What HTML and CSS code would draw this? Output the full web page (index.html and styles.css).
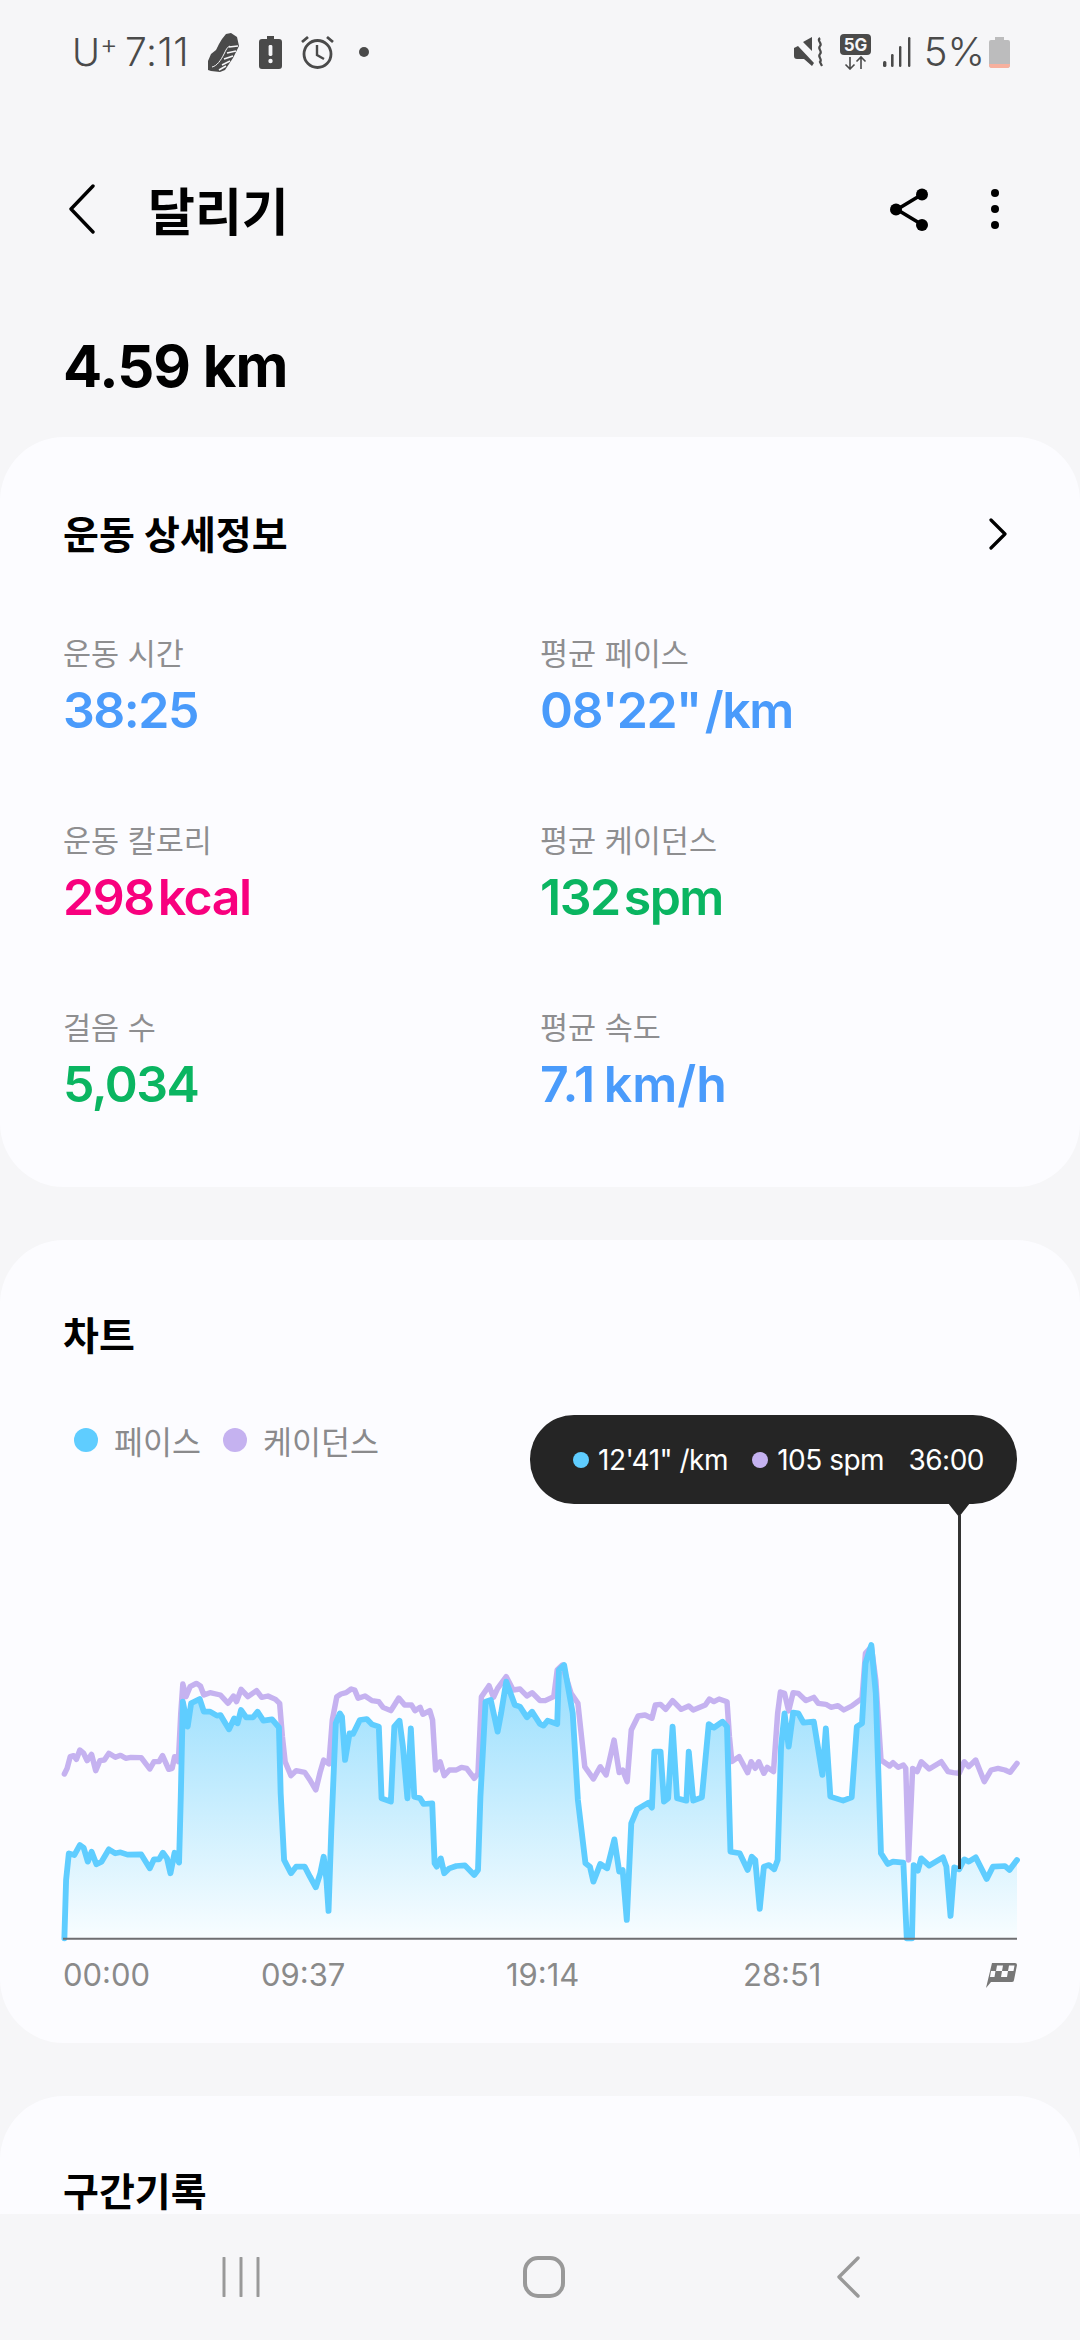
FILE: index.html
```html
<!DOCTYPE html>
<html lang="ko">
<head>
    <meta charset="UTF-8">
    <meta name="viewport" content="width=device-width, initial-scale=1.0">
    <title>달리기</title>
    <link rel="stylesheet" href="styles.css">
</head>
<body>
    <div class="status-bar">
        <div class="status-left">
            <span class="carrier">U<sup>+</sup></span>
            <span class="clock">7:11</span>
            <svg class="ic-shoe" viewBox="0 0 31 39"><path d="M18 1l5-1 6 4 2 9-6 12-8 12-5 2-9-1-3-1 0-9 3-7 5-4 3-6 3-5z" fill="#4a4a4a"/><path d="M30 13l-9 1M28 18l-9 2M25 23l-9 3M22 28l-8 4M18 33l-7 4" stroke="#f6f6f8" stroke-width="1.6" fill="none"/><path d="M4 34c5-1 9-7 12-13 2-4 3-7 6-8" stroke="#f6f6f8" stroke-width="1" fill="none"/></svg>
            <svg class="ic-batt" viewBox="0 0 23 33"><path d="M8 0h7v3h5a3 3 0 0 1 3 3v24a3 3 0 0 1-3 3H3a3 3 0 0 1-3-3V6a3 3 0 0 1 3-3h5z" fill="#4a4a4a"/><rect x="9.6" y="9" width="3.8" height="11" rx="1.4" fill="#f6f6f8"/><circle cx="11.5" cy="25" r="2.2" fill="#f6f6f8"/></svg>
            <svg class="ic-alarm" viewBox="0 0 33 34"><circle cx="16.500" cy="19" r="13.500" fill="none" stroke="#4a4a4a" stroke-width="2.800"/><path d="M16 10v10l7 4" fill="none" stroke="#4a4a4a" stroke-width="2.400"/><path d="M1 7l6-5M32 7l-6-5" stroke="#4a4a4a" stroke-width="2.800"/></svg>
            <span class="status-dot"></span>
        </div>
        <div class="status-right">
            <svg class="ic-mute" viewBox="0 0 30 30"><path d="M0 11l4-2 16 17-2 3-8-7H3a3 3 0 0 1-3-3zM9 5l9-5v14z" fill="#4a4a4a"/><path d="M26 1c-4 3 3 5 0 8s3 5 0 8 3 5 0 8l2 4" fill="none" stroke="#4a4a4a" stroke-width="2.200"/></svg>
            <svg class="ic-5g" viewBox="0 0 31 36"><rect width="31" height="21" rx="4" fill="#4a4a4a"/><text x="15.500" y="16.500" text-anchor="middle" class="ic-5g-text">5G</text><path d="M10 23v12M5.500 30.500l4.500 4.500 4.500-4.500M21 35V23M16.500 27.500l4.500-4.500 4.500 4.500" fill="none" stroke="#4a4a4a" stroke-width="1.600"/></svg>
            <svg class="ic-signal" viewBox="0 0 28 30"><rect x="0" y="24" width="3.400" height="6" rx="1.500" fill="#4a4a4a"/><rect x="8" y="17" width="2.600" height="13" rx="1.200" fill="#4a4a4a"/><rect x="16" y="9" width="2.400" height="21" rx="1.200" fill="#4a4a4a"/><rect x="25" y="0" width="2.400" height="30" rx="1.200" fill="#4a4a4a"/></svg>
            <span class="battery-text">5%</span>
            <svg class="ic-level" viewBox="0 0 21 31"><path d="M6 0h9v3h4a2 2 0 0 1 2 2v23a3 3 0 0 1-3 3H3a3 3 0 0 1-3-3V5a2 2 0 0 1 2-2h4z" fill="#bcbcbd"/><path d="M0 27h21v1a3 3 0 0 1-3 3H3a3 3 0 0 1-3-3z" fill="#f7b09e"/></svg>
        </div>
    </div>

    <div class="app-bar">
        <svg class="back-btn" viewBox="0 0 26 50"><path d="M24 2L2 25l22 23" fill="none" stroke="#000" stroke-width="3.400" stroke-linecap="round" stroke-linejoin="round"/></svg>
        <h1>달리기</h1>
        <svg class="share-btn" viewBox="0 0 38 43"><path d="M31 7L7 21.500 31 36" fill="none" stroke="#000" stroke-width="3.600"/><circle cx="32" cy="6.500" r="6" fill="#000"/><circle cx="6" cy="21.500" r="6" fill="#000"/><circle cx="32" cy="37" r="6" fill="#000"/></svg>
        <div class="more-btn"><span></span><span></span><span></span></div>
    </div>

    <div class="distance">4.59 km</div>

    <main>
        <section class="card card-detail">
            <div class="card-head">
                <h2>운동 상세정보</h2>
                <svg class="card-arrow" viewBox="0 0 20 32"><path d="M3 2l14 14L3 30" fill="none" stroke="#000" stroke-width="3.200" stroke-linecap="round" stroke-linejoin="round"/></svg>
            </div>
            <div class="stats">
                <div class="stat"><p>운동 시간</p><strong class="blue">38:25</strong></div>
                <div class="stat"><p>평균 페이스</p><strong class="blue tight">08'22" /km</strong></div>
                <div class="stat"><p>운동 칼로리</p><strong class="pink tight">298 kcal</strong></div>
                <div class="stat"><p>평균 케이던스</p><strong class="green tight">132 spm</strong></div>
                <div class="stat"><p>걸음 수</p><strong class="green">5,034</strong></div>
                <div class="stat"><p>평균 속도</p><strong class="blue open">7.1 km/h</strong></div>
            </div>
        </section>

        <section class="card card-chart">
            <h2>차트</h2>
            <div class="legend">
                <span class="legend-item"><i class="dot dot-pace"></i>페이스</span>
                <span class="legend-item"><i class="dot dot-cadence"></i>케이던스</span>
            </div>
            <div class="tooltip">
                <span class="tip-item"><i class="tip-dot dot-pace"></i>12'41" /km</span>
                <span class="tip-item"><i class="tip-dot dot-cadence"></i>105 spm</span>
                <span class="tip-item">36:00</span>
                <i class="tip-arrow"></i>
                <i class="tip-stem"></i>
            </div>
            <svg class="chart" viewBox="183 180 2770 900" preserveAspectRatio="none">
                <defs>
                    <linearGradient id="area" gradientUnits="userSpaceOnUse" x1="0" y1="195" x2="0" y2="1075">
                        <stop offset="0" stop-color="#8fdbfd"/>
                        <stop offset="1" stop-color="#f8fdff"/>
                    </linearGradient>
                </defs>
                <path fill="url(#area)" d="M187 1075L192 900 200 820 216 825 232 795 243 803 255 845 266 815 280 853 295 845 316 808 335 820 350 817 370 824 410 823 435 865 447 838 462 838 473 818 485 835 495 880 507 818 520 848 525 650 531 365 545 440 555 370 580 357 592 395 610 395 630 407 640 405 665 448 680 415 690 430 700 390 715 412 735 412 748 395 765 422 790 418 810 442 815 640 825 840 845 880 860 860 885 860 900 890 917 922 930 880 940 830 948 900 954 993 962 750 975 430 987 400 993 410 1002 540 1015 460 1025 462 1045 420 1065 417 1080 433 1100 440 1108 655 1135 665 1145 440 1160 422 1170 500 1183 655 1193 445 1203 650 1220 655 1230 672 1255 670 1262 850 1268 860 1280 835 1290 880 1305 865 1325 858 1350 856 1377 885 1388 870 1395 650 1410 365 1425 360 1445 455 1455 400 1470 305 1495 375 1510 380 1530 412 1545 395 1568 432 1578 437 1590 422 1618 432 1623 270 1638 255 1663 400 1678 660 1700 850 1713 860 1723 905 1743 852 1763 865 1784 778 1798 875 1808 870 1820 1020 1833 730 1850 688 1883 668 1893 683 1900 515 1918 515 1928 665 1940 655 1953 440 1966 655 1993 662 2000 515 2013 662 2038 652 2058 432 2073 443 2098 425 2111 440 2121 815 2148 820 2171 870 2183 830 2193 840 2206 987 2218 860 2233 855 2248 868 2258 840 2268 500 2278 400 2290 500 2303 398 2318 400 2333 428 2363 425 2388 585 2398 445 2411 650 2448 662 2473 652 2488 440 2503 430 2513 250 2530 195 2543 340 2558 820 2578 852 2593 845 2623 848 2633 1075 2648 1075 2653 855 2665 872 2675 835 2698 857 2738 832 2748 860 2760 1008 2771 862 2785 868 2800 838 2813 845 2833 832 2865 897 2883 860 2918 858 2931 870 2953 840L2953 1075Z"/>
                <path class="line-cadence" d="M187 582L195 565 204 530 214 527 222 538 232 510 243 520 253 542 266 523 278 572 290 542 303 540 316 520 335 532 350 526 365 535 380 532 410 533 435 567 447 545 462 545 472 527 490 568 500 565 507 530 518 545 525 400 531 312 540 350 552 320 570 310 582 318 592 345 610 338 640 345 662 370 678 348 687 365 700 328 720 350 745 332 760 352 778 348 800 358 812 370 820 470 828 545 845 587 860 572 885 577 900 600 917 630 930 575 940 540 955 552 965 420 978 350 990 342 1005 338 1020 327 1030 330 1040 355 1060 348 1080 362 1100 365 1112 382 1135 392 1158 354 1175 375 1195 375 1205 392 1220 382 1228 403 1248 392 1256 420 1265 570 1278 545 1290 587 1305 570 1325 570 1340 562 1355 565 1377 595 1388 580 1398 350 1420 317 1433 352 1445 325 1470 290 1490 330 1510 327 1530 348 1545 338 1568 362 1583 362 1608 350 1618 270 1633 255 1658 340 1678 370 1698 560 1723 597 1743 560 1760 585 1783 480 1798 578 1808 570 1821 605 1833 450 1853 408 1873 405 1893 415 1903 375 1918 373 1933 388 1953 362 1978 388 2000 378 2013 390 2048 375 2060 357 2073 365 2088 357 2111 365 2118 470 2125 545 2146 530 2171 578 2181 545 2193 565 2203 545 2218 580 2228 562 2246 575 2258 400 2266 336 2278 340 2290 393 2303 338 2318 340 2340 362 2363 352 2376 370 2398 373 2413 382 2433 377 2450 390 2473 378 2503 355 2513 220 2530 200 2543 300 2558 540 2583 558 2593 548 2608 562 2623 555 2630 565 2638 840 2650 565 2663 575 2675 545 2698 567 2733 545 2753 575 2768 578 2785 580 2800 545 2813 560 2833 540 2858 605 2878 570 2898 565 2918 570 2933 577 2953 550"/>
                <path class="line-pace" d="M187 1075L192 900 200 820 216 825 232 795 243 803 255 845 266 815 280 853 295 845 316 808 335 820 350 817 370 824 410 823 435 865 447 838 462 838 473 818 485 835 495 880 507 818 520 848 525 650 531 365 545 440 555 370 580 357 592 395 610 395 630 407 640 405 665 448 680 415 690 430 700 390 715 412 735 412 748 395 765 422 790 418 810 442 815 640 825 840 845 880 860 860 885 860 900 890 917 922 930 880 940 830 948 900 954 993 962 750 975 430 987 400 993 410 1002 540 1015 460 1025 462 1045 420 1065 417 1080 433 1100 440 1108 655 1135 665 1145 440 1160 422 1170 500 1183 655 1193 445 1203 650 1220 655 1230 672 1255 670 1262 850 1268 860 1280 835 1290 880 1305 865 1325 858 1350 856 1377 885 1388 870 1395 650 1410 365 1425 360 1445 455 1455 400 1470 305 1495 375 1510 380 1530 412 1545 395 1568 432 1578 437 1590 422 1618 432 1623 270 1638 255 1663 400 1678 660 1700 850 1713 860 1723 905 1743 852 1763 865 1784 778 1798 875 1808 870 1820 1020 1833 730 1850 688 1883 668 1893 683 1900 515 1918 515 1928 665 1940 655 1953 440 1966 655 1993 662 2000 515 2013 662 2038 652 2058 432 2073 443 2098 425 2111 440 2121 815 2148 820 2171 870 2183 830 2193 840 2206 987 2218 860 2233 855 2248 868 2258 840 2268 500 2278 400 2290 500 2303 398 2318 400 2333 428 2363 425 2388 585 2398 445 2411 650 2448 662 2473 652 2488 440 2503 430 2513 250 2530 195 2543 340 2558 820 2578 852 2593 845 2623 848 2633 1075 2648 1075 2653 855 2665 872 2675 835 2698 857 2738 832 2748 860 2760 1008 2771 862 2785 868 2800 838 2813 845 2833 832 2865 897 2883 860 2918 858 2931 870 2953 840"/>
                <line class="baseline" x1="183" y1="1076" x2="2953" y2="1076"/>
            </svg>
            <div class="axis">
                <span>00:00</span>
                <span>09:37</span>
                <span>19:14</span>
                <span>28:51</span>
                <svg class="ic-flag" viewBox="0 0 31 26"><path d="M6 1h23a2 2 0 0 1 2 2l-3 15a2 2 0 0 1-2 2H5L0 26z" fill="#777"/><path d="M11 3.500h6l-1 5.500h-6zM23 3.500h5.500l-1 5.500H22zM16 9h6l-1 6h-6zM9.500 9l-1 6H4l1-6z" fill="#fcfcff"/></svg>
            </div>
        </section>

        <section class="card card-laps">
            <h2>구간기록</h2>
        </section>
    </main>

    <nav class="nav-bar">
        <svg class="nav-recent" viewBox="0 0 38 40"><path d="M2 1v38M19 1v38M36 1v38" stroke="#999" stroke-width="3" stroke-linecap="round"/></svg>
        <svg class="nav-home" viewBox="0 0 42 42"><rect x="2" y="2" width="38" height="38" rx="13" fill="none" stroke="#999" stroke-width="4"/></svg>
        <svg class="nav-back" viewBox="0 0 23 42"><path d="M21 2L2 21l19 19" fill="none" stroke="#999" stroke-width="3.400" stroke-linecap="round" stroke-linejoin="round"/></svg>
    </nav>
</body>
</html>
```

FILE: styles.css
```css
*{
    margin: 0;
    padding: 0;
    box-sizing: border-box;
    font-family: Inter, "Noto Sans CJK KR", sans-serif;
}
body{
    width: 1080px;
    height: 2340px;
    overflow: hidden;
    background-color: #f6f6f8;
    display: flex;
    flex-direction: column;
}

/* status bar */
.status-bar{
    height: 104px;
    padding: 0 70px 0 72px;
    display: flex;
    justify-content: space-between;
    align-items: center;
    color: #4a4a4a;
    flex-shrink: 0;
}
.status-left, .status-right{
    display: flex;
    align-items: center;
}
.carrier{
    font-size: 38px;
    font-weight: 300;
    line-height: 40px;
    width: 53px;
    white-space: nowrap;
}
.carrier sup{
    font-size: 27px;
    line-height: 0;
    vertical-align: 12px;
}
.clock{
    font-size: 39px;
    font-weight: 300;
    line-height: 40px;
    letter-spacing: 0.500px;
    width: 83px;
}
.ic-shoe{ width: 31px; height: 39px; margin-right: 20px; }
.ic-batt{ width: 23px; height: 33px; margin-right: 19px; }
.ic-alarm{ width: 33px; height: 34px; margin-right: 25px; }
.status-dot{
    width: 10px;
    height: 10px;
    border-radius: 50%;
    background-color: #4a4a4a;
}
.ic-mute{ width: 30px; height: 30px; margin-right: 16px; }
.ic-5g{ width: 31px; height: 36px; margin-right: 12px; }
.ic-5g-text{
    font-size: 17px;
    font-weight: 700;
    fill: #f6f6f8;
}
.ic-signal{ width: 28px; height: 30px; margin-right: 13px; }
.battery-text{
    font-size: 40px;
    font-weight: 300;
    line-height: 40px;
    margin-right: 4px;
}
.ic-level{ width: 21px; height: 31px; }

/* title row */
.app-bar{
    height: 210px;
    padding: 0 81px 0 69px;
    display: flex;
    align-items: center;
    flex-shrink: 0;
}
.back-btn{ width: 26px; height: 50px; margin-right: 53px; }
h1{
    font-size: 51px;
    font-weight: 700;
    color: #000;
    flex: 1;
}
.share-btn{ width: 38px; height: 43px; margin-right: 63px; }
.more-btn{
    width: 8px;
    display: flex;
    flex-direction: column;
    gap: 8px;
}
.more-btn span{
    width: 8px;
    height: 8px;
    border-radius: 50%;
    background-color: #000;
}

.distance{
    height: 123px;
    padding: 21px 0 0 63px;
    font-size: 58px;
    font-weight: 700;
    line-height: 62px;
    letter-spacing: -1px;
    color: #000;
    flex-shrink: 0;
}

/* cards */
main{
    flex: 1;
    min-height: 0;
    overflow: hidden;
    display: flex;
    flex-direction: column;
    gap: 53px;
}
.card{
    background-color: #fcfcff;
    border-radius: 64px;
    flex-shrink: 0;
}
h2{
    font-size: 39px;
    font-weight: 700;
    line-height: 50px;
    color: #000;
}
.card-detail{
    height: 750px;
    padding: 73px 72px 0 63px;
}
.card-head{
    display: flex;
    justify-content: space-between;
    align-items: center;
}
.card-arrow{ width: 20px; height: 32px; margin-bottom: 2px; }
.stats{
    margin-top: 74px;
    display: grid;
    grid-template-columns: 477px 1fr;
    row-gap: 81px;
}
.stat p{
    font-size: 30.500px;
    line-height: 40px;
    color: #8e8e90;
}
.stat strong{
    display: block;
    margin-top: 6px;
    font-size: 50px;
    font-weight: 600;
    line-height: 60px;
    letter-spacing: -1.500px;
    white-space: nowrap;
}
.stat .tight{ word-spacing: -7px; }
.stat .open{ word-spacing: -4px; letter-spacing: 0; }
.blue{ color: #4a9bfb; }
.pink{ color: #f8007e; }
.green{ color: #0ab561; }

/* chart card */
.card-chart{
    position: relative;
    height: 803px;
    padding: 71px 63px 0;
}
.legend{
    margin-top: 59px;
    height: 40px;
    padding-left: 11px;
    display: flex;
    gap: 22px;
}
.legend-item{
    display: flex;
    align-items: center;
    gap: 16px;
    font-size: 31.500px;
    color: #8a8a8c;
}
.dot{
    width: 24px;
    height: 24px;
    border-radius: 50%;
}
.dot-pace{ background-color: #5fcdff; }
.dot-cadence{ background-color: #c5b2f0; }
.tooltip{
    position: absolute;
    top: 175px;
    left: 530px;
    width: 487px;
    height: 89px;
    padding: 0 33px 0 43px;
    border-radius: 44px;
    background-color: #252525;
    color: #fff;
    font-size: 28px;
    letter-spacing: -0.500px;
    display: flex;
    justify-content: space-between;
    align-items: center;
    z-index: 2;
}
.tip-item{
    display: flex;
    align-items: center;
    gap: 9px;
    white-space: pre;
}
.tip-dot{
    width: 16px;
    height: 16px;
    border-radius: 50%;
}
.tip-arrow{
    position: absolute;
    top: 88px;
    left: 418px;
    border-left: 11px solid transparent;
    border-right: 11px solid transparent;
    border-top: 14px solid #252525;
}
.tip-stem{
    position: absolute;
    top: 100px;
    left: 428px;
    width: 3px;
    height: 354px;
    background-color: #333;
}
.chart{
    display: block;
    width: 954px;
    height: 300px;
    margin-top: 180px;
    overflow: visible;
}
.line-pace, .line-cadence{
    fill: none;
    stroke-linejoin: round;
    stroke-linecap: round;
}
.line-pace{ stroke: #5fcdff; stroke-width: 17; }
.line-cadence{ stroke: #c5b2f0; stroke-width: 16; }
.baseline{
    stroke: #6e6e70;
    stroke-width: 6;
}
.axis{
    margin-top: 15px;
    display: grid;
    grid-template-columns: 198px 245px 237px 1fr auto;
    align-items: center;
    font-size: 31px;
    line-height: 40px;
    color: #8a8a8a;
}
.ic-flag{ width: 31px; height: 26px; }
.card-laps{
    height: 120px;
    padding: 76px 63px 0;
    border-radius: 64px 64px 0 0;
}
.card-laps h2{
    line-height: 40px;
}

/* bottom nav */
.nav-bar{
    height: 126px;
    background-color: #f6f6f8;
    display: grid;
    grid-template-columns: 222px 301px 314px 1fr;
    align-items: center;
    flex-shrink: 0;
}
.nav-recent{ width: 38px; height: 40px; grid-column: 1; margin-left: 222px; }
.nav-home{ width: 42px; height: 42px; grid-column: 2; margin-left: 301px; }
.nav-back{ width: 23px; height: 42px; grid-column: 3; margin-left: 314px; }
```
